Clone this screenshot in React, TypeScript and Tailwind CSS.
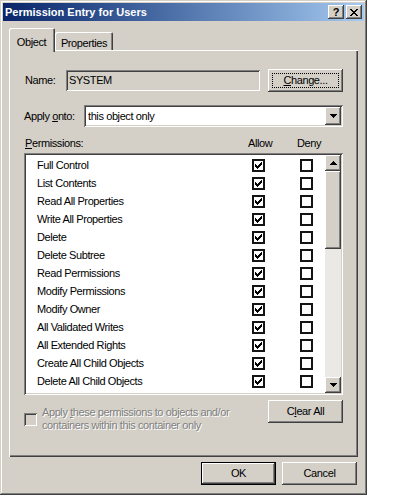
import React from "react";

const raised =
  "shadow-[inset_-1px_-1px_#404040,inset_1px_1px_#ffffff,inset_-2px_-2px_#808080,inset_2px_2px_#d4d0c8]";
const sunken =
  "shadow-[inset_1px_1px_#808080,inset_-1px_-1px_#ffffff,inset_2px_2px_#404040,inset_-2px_-2px_#d4d0c8]";
const defBtn =
  "shadow-[inset_0_0_0_1px_#000000,inset_-2px_-2px_#404040,inset_2px_2px_#ffffff,inset_-3px_-3px_#808080,inset_3px_3px_#d4d0c8]";

function Pix({ pts, w, h }: { pts: number[][]; w: number; h: number }) {
  return (
    <svg width={w} height={h} viewBox={`0 0 ${w} ${h}`} shapeRendering="crispEdges">
      {pts.map(([x, y], i) => (
        <rect key={i} x={x} y={y} width="1" height="1" fill="#000" />
      ))}
    </svg>
  );
}

const checkPts = [
  [6, 0], [5, 1], [6, 1], [0, 2], [4, 2], [5, 2], [6, 2], [0, 3], [1, 3], [3, 3], [4, 3], [5, 3],
  [0, 4], [1, 4], [2, 4], [3, 4], [4, 4], [1, 5], [2, 5], [3, 5], [2, 6],
];

const closePts: number[][] = [];
[
  "XX....XX",
  ".XX..XX.",
  "..XXXX..",
  "...XX...",
  "..XXXX..",
  ".XX..XX.",
  "XX....XX",
].forEach((row, y) => row.split("").forEach((c, x) => c === "X" && closePts.push([x, y])));

function Tri({ down }: { down?: boolean }) {
  return (
    <svg width="7" height="4" viewBox="0 0 7 4" shapeRendering="crispEdges">
      {[0, 1, 2, 3].map((i) => {
        const r = down ? i : 3 - i;
        return <rect key={i} x={r} y={i} width={7 - 2 * r} height="1" fill="#000" />;
      })}
    </svg>
  );
}

function Box({ checked }: { checked?: boolean }) {
  return (
    <div className="w-[13px] h-[13px] border-2 border-[#141414] bg-white flex items-center justify-center shrink-0">
      {checked && <Pix pts={checkPts} w={7} h={7} />}
    </div>
  );
}

const rows = [
  "Full Control",
  "List Contents",
  "Read All Properties",
  "Write All Properties",
  "Delete",
  "Delete Subtree",
  "Read Permissions",
  "Modify Permissions",
  "Modify Owner",
  "All Validated Writes",
  "All Extended Rights",
  "Create All Child Objects",
  "Delete All Child Objects",
  "",
];

export default function App() {
  return (
    <div className="w-[400px] h-[495px] bg-white flex font-['Liberation_Sans',Arial,sans-serif] text-[11px] tracking-[-0.4px] text-black">
      <div className="w-[367px] h-[495px] bg-[#d4d0c8] p-[3px] flex flex-col shadow-[inset_-1px_-1px_#404040,inset_1px_1px_#d4d0c8,inset_-2px_-2px_#808080,inset_2px_2px_#ffffff]">
        {/* Title bar */}
        <div className="h-[18px] bg-gradient-to-r from-[#0a246a] to-[#a6caf0] flex items-center pl-[2px] pr-[2px]">
          <span className="text-white font-bold tracking-normal text-[11px] leading-none">
            Permission Entry for Users
          </span>
          <div className="ml-auto flex gap-[2px]">
            <div className={`w-[16px] h-[14px] bg-[#d4d0c8] ${raised} flex items-center justify-center`}>
              <span className="font-bold text-[11px] leading-none tracking-normal">?</span>
            </div>
            <div className={`w-[16px] h-[14px] bg-[#d4d0c8] ${raised} flex items-center justify-center`}>
              <Pix pts={closePts} w={8} h={7} />
            </div>
          </div>
        </div>

        {/* Tabs */}
        <div className="mt-[7px] h-[22px] flex items-start pl-[6px]">
          <div className="relative z-10 h-[24px] w-[46px] bg-[#d4d0c8] rounded-t-[2px] shadow-[inset_1px_1px_#ffffff,inset_-1px_0_#404040,inset_-2px_0_#808080] flex justify-center pt-[6px] pr-[1px]">
            Object
          </div>
          <div className="mt-[4px] h-[18px] w-[58px] bg-[#d4d0c8] rounded-t-[2px] shadow-[inset_1px_1px_#ffffff,inset_-1px_0_#404040,inset_-2px_0_#808080] flex justify-center pt-[3px]">
            Properties
          </div>
        </div>

        {/* Panel */}
        <div className="ml-[6px] w-[349px] h-[407px] flex flex-col pl-[15px] pr-[15px] pt-[19px] shadow-[inset_1px_1px_#ffffff,inset_-1px_-1px_#404040,inset_-2px_-2px_#808080]">
          {/* Name */}
          <div className="h-[23px] flex items-center">
            <span className="w-[42px] pl-[1px]">Name:</span>
            <div className={`w-[194px] h-[21px] bg-[#d4d0c8] ${sunken} flex items-center pl-[3px]`}>SYSTEM</div>
            <div className={`ml-auto w-[75px] h-[23px] bg-[#d4d0c8] ${raised} p-[4px]`}>
              <div className="w-full h-full border border-dotted border-black flex items-center justify-center">
                <span>
                  <u>C</u>hange...
                </span>
              </div>
            </div>
          </div>

          {/* Apply onto */}
          <div className="mt-[13px] h-[22px] flex items-center">
            <span className="w-[60px]">
              Apply <u>o</u>nto:
            </span>
            <div className={`flex-1 h-[22px] bg-white ${sunken} flex items-center p-[2px]`}>
              <span className="flex-1 pl-[2px]">this object only</span>
              <div className={`w-[16px] h-[18px] bg-[#d4d0c8] ${raised} flex items-center justify-center`}>
                <Tri down />
              </div>
            </div>
          </div>

          {/* Headers */}
          <div className="mt-[8px] h-[16px] flex items-center">
            <span className="w-[224px] pl-[1px]">
              <u>P</u>ermissions:
            </span>
            <span className="w-[49px]">Allow</span>
            <span>Deny</span>
          </div>

          {/* List */}
          <div className={`mt-[2px] h-[242px] ${sunken} p-[2px] flex bg-white`}>
            <div className="flex-1 overflow-hidden pt-[1px]">
              {rows.map((r, i) => (
                <div key={i} className="h-[18px] flex items-center">
                  <span className="w-[226px] pl-[11px] whitespace-nowrap">{r}</span>
                  <Box checked />
                  <div className="w-[35px]" />
                  <Box />
                </div>
              ))}
            </div>
            <div className="w-[16px] flex flex-col bg-[#ebe9e5]">
              <div className={`h-[16px] bg-[#d4d0c8] ${raised} flex items-center justify-center`}>
                <Tri />
              </div>
              <div className={`h-[78px] bg-[#d4d0c8] ${raised}`} />
              <div className="flex-1" />
              <div className={`h-[16px] bg-[#d4d0c8] ${raised} flex items-center justify-center`}>
                <Tri down />
              </div>
            </div>
          </div>

          {/* Bottom */}
          <div className="mt-[5px] flex items-start">
            <div className="mt-[6px] flex items-start">
              <div className={`mt-[7px] w-[13px] h-[13px] bg-[#d4d0c8] ${sunken}`} />
              <div className="ml-[5px] leading-[13px] text-[#808080] [text-shadow:1px_1px_0_#ffffff]">
                <div>
                  Apply <u>t</u>hese permissions to objects and/or
                </div>
                <div>containers within this container only</div>
              </div>
            </div>
            <div className={`ml-auto w-[75px] h-[23px] bg-[#d4d0c8] ${raised} flex items-center justify-center`}>
              <span>
                C<u>l</u>ear All
              </span>
            </div>
          </div>
        </div>

        {/* Footer buttons */}
        <div className="mt-[5px] flex justify-end gap-[6px] pr-[7px]">
          <div className={`w-[75px] h-[23px] bg-[#d4d0c8] ${defBtn} flex items-center justify-center`}>OK</div>
          <div className={`w-[75px] h-[23px] bg-[#d4d0c8] ${raised} flex items-center justify-center`}>Cancel</div>
        </div>
      </div>
    </div>
  );
}
